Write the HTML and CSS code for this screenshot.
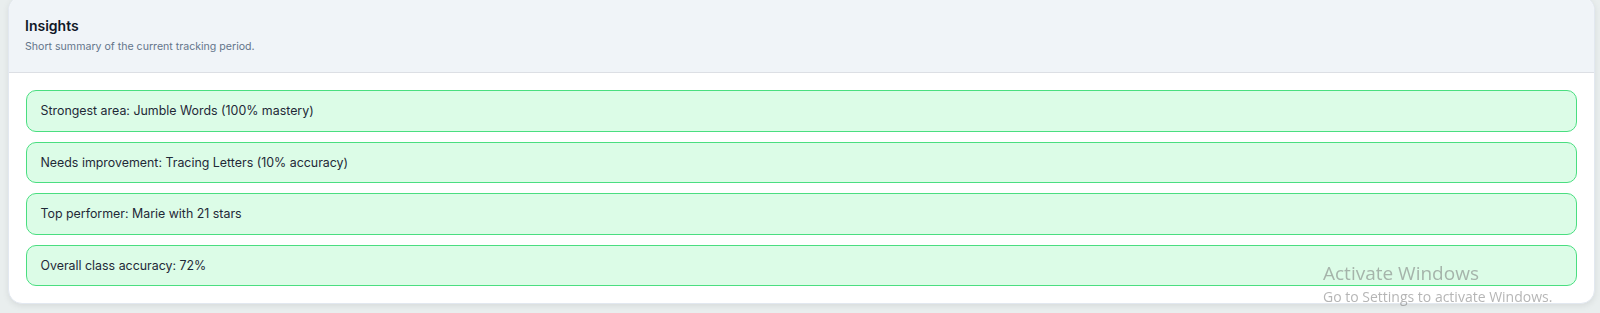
FILE: index.html
```html
<!DOCTYPE html>
<html>
<head>
<meta charset="utf-8">
<link rel="stylesheet" href="styles.css">
</head>
<body>
<section class="card">
  <header class="card-head">
    <h2 class="title">Insights</h2>
    <p class="subtitle">Short summary of the current tracking period.</p>
  </header>
  <div class="card-body">
    <div class="insight">Strongest area: Jumble Words (100% mastery)</div>
    <div class="insight">Needs improvement: Tracing Letters (10% accuracy)</div>
    <div class="insight">Top performer: Marie with 21 stars</div>
    <div class="insight">Overall class accuracy: 72%</div>
  </div>
</section>
<div class="watermark">
  <div class="wm-title">Activate Windows</div>
  <div class="wm-sub">Go to Settings to activate Windows.</div>
</div>
</body>
</html>
```
FILE: styles.css
```css
html, body {
  margin: 0;
  padding: 0;
  background: #e9eeee;
  font-family: Inter, "Noto Sans", sans-serif;
}
body {
  padding: 0 5px 0 8px;
  height: 313px;
  overflow: hidden;
}
.card {
  margin-top: -4px;
  background: #ffffff;
  border: 1px solid #e2e8f0;
  border-radius: 14px;
  overflow: hidden;
  box-shadow: 0 2px 6px rgba(0, 0, 0, 0.08);
}
.card-head {
  background: #f0f4f8;
  border-bottom: 1px solid #dcdfe4;
  padding: 19px 16px 18px;
}
.title {
  margin: 0;
  font-size: 14px;
  font-weight: 600;
  color: #111827;
  line-height: 19px;
}
.subtitle {
  margin: 5px 0 0;
  font-size: 10.6px;
  color: #64748b;
  line-height: 14px;
}
.card-body {
  padding: 17px 17px 17px;
  display: flex;
  flex-direction: column;
  gap: 10px;
}
.insight {
  height: 41.5px;
  box-sizing: border-box;
  display: flex;
  align-items: center;
  padding: 0 13.5px;
  background: #dcfce7;
  border: 1.5px solid #4ade80;
  border-radius: 10px;
  font-size: 12.4px;
  color: #1f2937;
}
.watermark {
  position: fixed;
  left: 1323px;
  top: 262px;
  font-family: "Open Sans", "Noto Sans", sans-serif;
  color: rgba(120, 120, 120, 0.55);
}
.wm-title {
  font-size: 19px;
  line-height: 22px;
}
.wm-sub {
  margin-top: 4px;
  font-size: 14px;
  line-height: 18px;
}
```
